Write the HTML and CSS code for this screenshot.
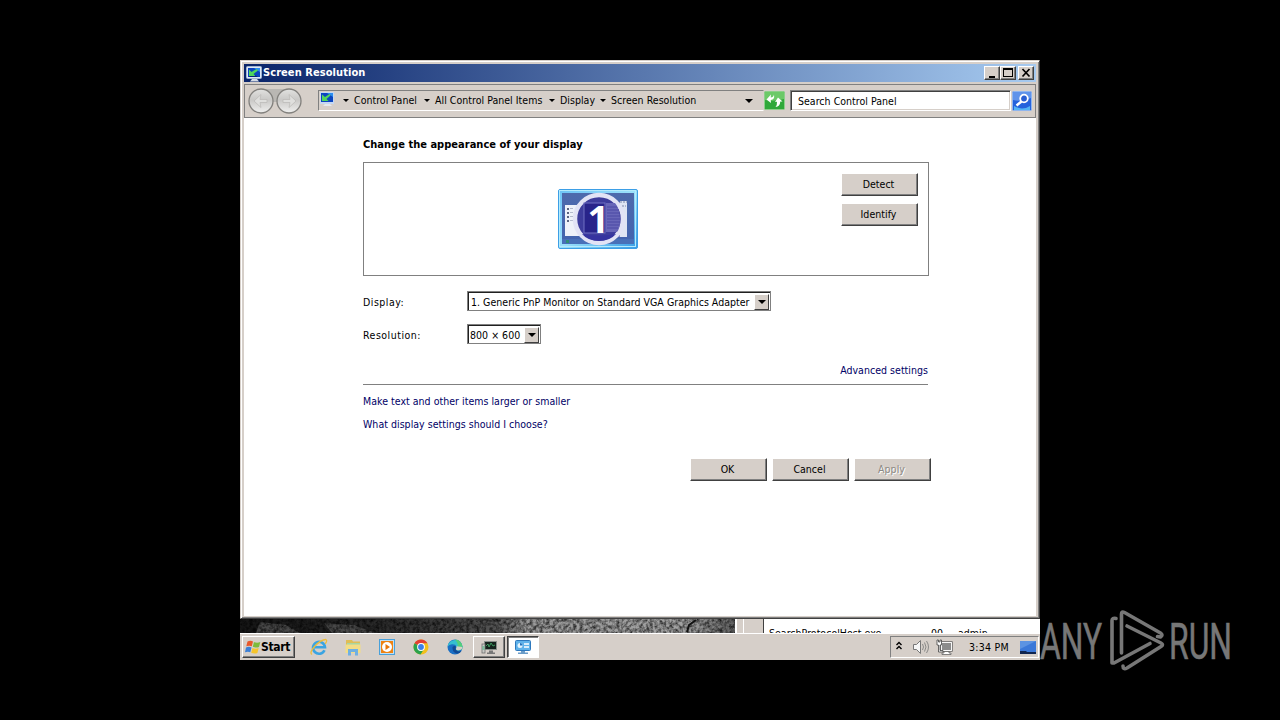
FILE: index.html
```html
<!doctype html>
<html>
<head>
<meta charset="UTF-8">
<title>Screen Resolution</title>
<link rel="stylesheet" href="styles.css">
</head>

<body>
<div class="desktop">
	<div class="window">
		<div class="titlebar">
			<svg class="title-icon" width="17" height="16" viewBox="0 0 17 16">
				<rect x="0.5" y="0.5" width="15" height="12" rx="1" fill="#dfe8f5" stroke="#9fb4d0"/>
				<rect x="2" y="2" width="12" height="9" fill="#0b45c0"/>
				<path d="M8 2h6v4z" fill="#2c8df0"/>
				<path d="M2 11h10l-3-2H6z" fill="#07217a"/>
				<path d="M3 3.500v6.500h6.500L7.500 8 12 4.500 10.500 3 5.500 6z" fill="#4fd65c"/>
				<path d="M4 15.500h9l-2-2.500H6z" fill="#d5dce6"/>
			</svg>
			<span class="title-text">Screen Resolution</span>
			<div class="title-buttons">
				<span class="tb"><svg width="12" height="10"><path d="M3 8h6v2H3z"/></svg></span>
				<span class="tb"><svg width="12" height="10"><path d="M1 0h10v9H1zM2 2v6h8V2z" fill-rule="evenodd"/></svg></span>
				<span class="tb close"><svg width="12" height="10"><path d="M2.500 1l7 7.500M9.500 1l-7 7.500" stroke="#000" stroke-width="1.700"/></svg></span>
			</div>
		</div>

		<div class="toolbar">
			<svg class="nav" width="56" height="28" viewBox="0 0 56 28">
				<defs>
					<linearGradient id="ball" x1="0" y1="0" x2="0" y2="1">
						<stop offset="0" stop-color="#e2e2e0"/>
						<stop offset=".45" stop-color="#c9c8c6"/>
						<stop offset="1" stop-color="#f0f0ef"/>
					</linearGradient>
				</defs>
				<path d="M14 2h28v9q-14 8-28 0z" fill="#b9b7b3"/>
				<circle cx="14" cy="14" r="12" fill="url(#ball)" stroke="#82807d" stroke-width="1.300"/>
				<circle cx="42" cy="14" r="12" fill="url(#ball)" stroke="#82807d" stroke-width="1.300"/>
				<path d="M7 14l7-6.500-1 5h7v3h-7l1 5z" fill="#dfdfdd" stroke="#bcbbb9" stroke-width=".8"/>
				<path d="M49 14l-7-6.500 1 5h-7v3h7l-1 5z" fill="#dfdfdd" stroke="#bcbbb9" stroke-width=".8"/>
			</svg>
			<div class="address">
				<svg class="addr-icon" width="16" height="16" viewBox="0 0 16 16">
					<rect x="0" y="0" width="14" height="12" fill="#c5d8f2"/>
					<rect x="1" y="1" width="12" height="9" fill="#0b45c0"/>
					<path d="M7 1h6v4z" fill="#2c8df0"/>
					<path d="M2 2.500V9h6.500L6.500 7 10.500 3.500 9.500 2 5 5z" fill="#4fd65c"/>
					<path d="M3 14h9l-2-2H5z" fill="#e4e8ee"/>
				</svg>
				<i class="arrow a1"></i>
				<span class="crumb c1">Control Panel</span>
				<i class="arrow"></i>
				<span class="crumb c2">All Control Panel Items</span>
				<i class="arrow"></i>
				<span class="crumb c3">Display</span>
				<i class="arrow"></i>
				<span class="crumb c4">Screen Resolution</span>
				<i class="arrow big"></i>
			</div>
			<svg class="refresh" width="21" height="19" viewBox="0 0 21 19">
				<rect x=".5" y=".5" width="20" height="18" rx="1" fill="#2fa83a" stroke="#8ccf8a"/>
				<path d="M1 1h19v7q-9 3-19 1z" fill="#6cc968"/>
				<path d="M2.500 8.500l4.500-5-.3 3q2.800 0 3.300-3 1 5-3.300 5.500l.3 3z" fill="#fff"/>
				<path d="M18.500 10.500l-4.500-4-3 4.500 2-.3q.3 3-1.500 5.300 4.500-.5 4.800-5.500z" fill="#fff"/>
			</svg>
			<div class="search"><span>Search Control Panel</span></div>
			<svg class="search-btn" width="20" height="20" viewBox="0 0 20 20">
				<rect x=".5" y=".5" width="19" height="19" rx="1" fill="#2462dc" stroke="#8fb5ee"/>
				<path d="M1 1h18v6q-8 4-18 2z" fill="#5f93ea"/>
				<path d="M2 15q8 5 16 0v4H2z" fill="#52b4f4"/>
				<circle cx="12" cy="7.500" r="3.800" fill="#2a5fd2" stroke="#fff" stroke-width="1.800"/>
				<path d="M9.500 10.500l-5 4" stroke="#fff" stroke-width="2.500"/>
			</svg>
		</div>

		<div class="content">
			<h1>Change the appearance of your display</h1>
			<div class="preview">
				<svg class="monitor" width="80" height="60" viewBox="0 0 80 60">
					<defs>
						<linearGradient id="frame" x1="0" y1="0" x2="1" y2="1">
							<stop offset="0" stop-color="#6cc3f6"/>
							<stop offset=".5" stop-color="#9be1fb"/>
							<stop offset="1" stop-color="#369be6"/>
						</linearGradient>
						<linearGradient id="desk" x1="0" y1="0" x2="0" y2="1">
							<stop offset="0" stop-color="#4e6aac"/>
							<stop offset="1" stop-color="#4263ae"/>
						</linearGradient>
					</defs>
					<rect x=".5" y=".5" width="79" height="59" rx="1.500" fill="url(#frame)" stroke="#3d9fe6"/>
					<rect x="1.500" y="1.500" width="76" height="56" fill="none" stroke="#b4ebfc"/>
					<rect x="4" y="4" width="72" height="51" fill="url(#desk)"/>
					<rect x="7" y="16" width="23" height="31" fill="#eef1f9"/>
					<path d="M10 19v15" stroke="#5c6480" stroke-width="2" stroke-dasharray="2 2"/>
					<path d="M13.500 19v15" stroke="#b4bacd" stroke-width="3" stroke-dasharray="1 3"/>
					<rect x="24" y="13" width="45" height="35" fill="#8584c8"/>
					<rect x="62" y="12" width="7" height="36" fill="#dfe5f3"/>
					<path d="M62 13h7M64 17h4" stroke="#7e88a8" stroke-dasharray="2 1"/>
					<rect x="4" y="50" width="72" height="5" fill="#4870b8"/>
					<rect x="8" y="51" width="3" height="3" fill="#2e8f75"/>
					<circle cx="41" cy="30" r="24" fill="#3d3c9c" stroke="#e2e3f5" stroke-width="4.500"/>
					<rect x="26" y="14" width="21" height="30" fill="#28248a" stroke="#7170c2" stroke-width="1"/>
					<path d="M48 14h9q5 6 5 16t-3 13H48z" fill="#6866b8"/>
					<path d="M49 18h10M49 21h12M49 24h13M49 27h13M49 30h13M49 33h13M49 36h12M49 39h11" stroke="#4b49a4"/>
					<path d="M24 45q17 3 34 0-6 7-17 7t-17-7z" fill="#3634a0"/>
					<text x="29.500" y="44" class="screen-num">1</text>
				</svg>
				<div class="side-buttons">
					<span class="btn">Detect</span>
					<span class="btn">Identify</span>
				</div>
			</div>

			<div class="row">
				<label>Display:</label>
				<div class="select display-select"><span>1. Generic PnP Monitor on Standard VGA Graphics Adapter</span><b><i class="arrow big"></i></b></div>
			</div>
			<div class="row">
				<label>Resolution:</label>
				<div class="select res-select"><span>800 × 600</span><b><i class="arrow big"></i></b></div>
			</div>

			<div class="advanced"><a>Advanced settings</a></div>
			<div class="links">
				<a>Make text and other items larger or smaller</a>
				<a>What display settings should I choose?</a>
			</div>
			<div class="dialog-buttons">
				<span class="btn">OK</span>
				<span class="btn">Cancel</span>
				<span class="btn disabled">Apply</span>
			</div>
		</div>
	</div>

	<!-- what shows of the desktop under the window -->
	<div class="strip">
		<svg class="wallpaper" width="495" height="14">
			<defs>
				<linearGradient id="rock">
					<stop offset="0" stop-color="#151515"/>
					<stop offset=".22" stop-color="#222"/>
					<stop offset=".4" stop-color="#3a3a3a"/>
					<stop offset=".52" stop-color="#555"/>
					<stop offset=".58" stop-color="#9a9a9a"/>
					<stop offset=".9" stop-color="#a2a2a2"/>
					<stop offset="1" stop-color="#606060"/>
				</linearGradient>
				<filter id="grain" x="0" y="0" width="1" height="1">
					<feTurbulence type="fractalNoise" baseFrequency=".3" numOctaves="3" seed="4"/>
					<feColorMatrix values="0 0 0 0 0  0 0 0 0 0  0 0 0 0 0  1.5 0 0 0 -.5"/>
				</filter>
			</defs>
			<rect width="495" height="14" fill="url(#rock)"/>
			<path d="M20 3l26 3 14 8H16zM84 4l30 2 22 8H92z" fill="#484848"/>
			<rect width="495" height="14" filter="url(#grain)"/>
			<path d="M456 1l-7 5-2 7" fill="none" stroke="#111" stroke-width="2"/>
		</svg>
		<div class="back-frame"></div>
		<div class="back-list"><span class="p1">SearchProtocolHost.exe</span><span class="p2">00</span><span class="p3">admin</span></div>
	</div>

	<div class="taskbar">
		<div class="start">
			<svg width="16" height="16" viewBox="0 0 16 16">
				<path d="M2.500 2.500q3-1.500 5.500 0L6.800 7.300q-2.600-1.300-5.500 0z" fill="#e8582a"/>
				<path d="M9 3q3 1.400 6.300 0L14 8q-3 1.200-6.200-.2z" fill="#7dbb3c"/>
				<path d="M1 8.500q3-1.300 5.500 0L5.300 13.300q-2.300-1.300-5.300 0z" fill="#3b7fd6"/>
				<path d="M7.500 9q3 1.300 6.200 0L12.400 14q-3 1.200-6.200-.3z" fill="#f6c52c"/>
			</svg>
			<span>Start</span>
		</div>
		<div class="quick">
			<svg width="18" height="18" viewBox="0 0 18 18">
				<path d="M14.500 12.200A6 6 0 1 1 15 9.300H4.500" fill="none" stroke="#3aa4e2" stroke-width="2.600"/>
				<path d="M2 16.500Q-1 15 4.500 8.500 11 1.500 15.800 1.500q2 .8-.6 4.300" fill="none" stroke="#edbd3a" stroke-width="1.300"/>
			</svg>
			<svg width="18" height="18" viewBox="0 0 18 18">
				<path d="M2 2h6l1 1.500h7V14H2z" fill="#e0bd55"/>
				<path d="M3 5h13v3H3z" fill="#a9d6a0"/>
				<path d="M1.500 6.500h15V15h-15z" fill="#f3dd86"/>
				<path d="M4 17.500V11h10v6.500h-3V14H7v3.500z" fill="#6fb0e2"/>
			</svg>
			<svg width="18" height="18" viewBox="0 0 18 18">
				<rect x="1.500" y="1.500" width="15" height="15" fill="#bfe0f6" stroke="#48a0da"/>
				<rect x="3" y="3" width="12" height="12" fill="#ee8212"/>
				<circle cx="9" cy="9" r="5" fill="#fff"/>
				<path d="M7.500 6v6l4.500-3z" fill="#e8760a"/>
			</svg>
			<svg width="18" height="18" viewBox="0 0 18 18">
				<circle cx="9" cy="9" r="7.500" fill="#f2c01b"/>
				<path d="M9 9L2.500 5.200A7.500 7.500 0 0 1 15.500 5.300H9z" fill="#e23f33"/>
				<path d="M2.500 5.200A7.500 7.500 0 0 0 8.500 16.500L12.200 10.800 9 9z" fill="#2ba24c"/>
				<circle cx="9" cy="9" r="3.900" fill="#fff"/>
				<circle cx="9" cy="9" r="2.900" fill="#3c80e8"/>
			</svg>
			<svg width="18" height="18" viewBox="0 0 18 18">
				<circle cx="9" cy="9" r="7.500" fill="#1a6fc4"/>
				<path d="M1.600 8.500A7.500 7.500 0 0 1 16.500 9q0 3-3.500 3.200-3 0-3-1.500 1-.8.600-2.200Q9.500 6 6 6.200 3 6.500 1.600 8.500z" fill="#35bfd0"/>
				<path d="M9 1.500A7.500 7.500 0 0 1 16.500 9q0 3-3.500 3.200-3 0-3-1.500Q14 7 9 1.500z" fill="#52cf7c"/>
				<path d="M6.500 9q-.5 5 4 6.500 3 .3 5-2.500-5 1.500-6-2.300.6-1.700 0-2.700Q7.500 7.500 6.500 9z" fill="#124a93"/>
				<path d="M10 10.700q.8-1 .4-2.400l6 .8q0 2.900-3.400 3.100-3 0-3-1.500z" fill="#d6d0c8"/>
			</svg>
		</div>
		<div class="task">
			<svg width="18" height="16" viewBox="0 0 18 16">
				<rect x="4.500" y="2.500" width="12" height="8" fill="#14231d" stroke="#8a908c"/>
				<path d="M6 7l2-2 1 3 2-4 2 3 2-1" fill="none" stroke="#45b36c" stroke-width=".8"/>
				<path d="M9 11.500h4v2h2V15H7v-1.500h2z" fill="#777"/>
				<rect x="2" y="5" width="3" height="9" fill="#c8cac6" stroke="#707070" stroke-width=".8"/>
				<path d="M2.500 8h2M2.500 10h2" stroke="#3b7"/>
			</svg>
		</div>
		<div class="task active">
			<svg width="18" height="16" viewBox="0 0 18 16">
				<rect x="1.500" y="1.500" width="15" height="10" rx="1" fill="#5fb2ea" stroke="#2d78bd"/>
				<circle cx="6" cy="6.500" r="2.500" fill="#e4f4fd"/>
				<path d="M6 6.500V4A2.500 2.500 0 0 1 8.500 6.500z" fill="#2573bb"/>
				<path d="M10 5h5M10 8h5" stroke="#fff" stroke-width="1.300"/>
				<path d="M7 12h4v1.500h3V15H4v-1.500h3z" fill="#6b9cc8"/>
			</svg>
		</div>
		<div class="tray">
			<svg class="chevrons" width="8" height="12" viewBox="0 0 8 12"><path d="M1.500 5L4 2.500 6.500 5M1.500 9L4 6.500 6.500 9" fill="none" stroke="#000" stroke-width="1.400"/></svg>
			<svg class="speaker" width="18" height="16" viewBox="0 0 18 16">
				<path d="M1.500 5.500h3l4-4v13l-4-4h-3z" fill="#f6f6f6" stroke="#777"/>
				<path d="M10.500 5q2 3 0 6M12.500 3.500q3 4.500 0 9M14.500 2q4 6 0 12" fill="none" stroke="#8a8a88"/>
			</svg>
			<svg class="network" width="17" height="16" viewBox="0 0 17 16">
				<rect x="5.500" y="3.500" width="10" height="8" fill="#8c8c8c" stroke="#fff"/>
				<rect x="4.700" y="2.700" width="11.600" height="9.600" fill="none" stroke="#555" stroke-width=".7"/>
				<path d="M8 12.500h5v1.500h2v1.500H6V14h2z" fill="#fff" stroke="#555" stroke-width=".7"/>
				<path d="M1 1v5h1.500v7H7v-1.500H4V6h1.500V1H4v2H2.500V1z" fill="#fff" stroke="#444" stroke-width=".8"/>
			</svg>
			<span class="clock">3:34 PM</span>
			<svg class="show-desk" width="16" height="13" viewBox="0 0 16 13">
				<rect width="16" height="12" fill="#3b78d8"/>
				<path d="M0 0h16L0 8z" fill="#5c93e2"/>
				<path d="M0 10h6l1 1h9v2H0z" fill="#10254f"/>
			</svg>
		</div>
	</div>
</div>

<svg class="watermark" width="200" height="64" viewBox="1036 608 200 64">
	<text class="wm" x="1040" y="659" textLength="62" lengthAdjust="spacingAndGlyphs">ANY</text>
	<text class="wm" x="1169" y="659" textLength="63" lengthAdjust="spacingAndGlyphs">RUN</text>
	<g fill="none" stroke="#777" stroke-width="3.600" stroke-linejoin="round" stroke-linecap="round">
		<path d="M1116 618.500q-4-1-4 2V663h2l36-19.500"/>
		<path d="M1121.500 653v-39q0-3 3-1.500l36 20.500q3 2 0 4l-3-.5"/>
		<path d="M1127 626l34 17q3 1.500 0 3.500l-34 21.500q-4 2-4-2"/>
	</g>
</svg>
</body>
</html>
```
FILE: styles.css
```css
html, body {
	height: 100%;
	margin: 0;
}

body {
	background: #000;
	overflow: hidden;
	font-family: "DejaVu Sans Condensed", "DejaVu Sans", sans-serif;
	font-stretch: condensed;
	font-size: 10.5px;
	letter-spacing: 0.03px;
	line-height: 14px;
	color: #000;
	white-space: nowrap;
}

* {
	box-sizing: border-box;
}

svg {
	display: block;
	flex: none;
}

.desktop {
	width: 800px;
	height: 600px;
	margin: 60px auto 0;
	overflow: hidden;
	background: #d6cfc9;
}

/* window */
.window {
	height: 559px;
	padding: 3px 3px 2px 3px;
	background: #d6cfc9;
	border: 1px solid #d6cfc9;
	border-right-color: #404040;
	border-bottom-color: #404040;
	box-shadow: inset 1px 1px #fff, inset -1px -1px #808080;
}

.titlebar {
	display: flex;
	align-items: center;
	height: 18px;
	padding: 0 2px;
	background: linear-gradient(to right, #0a246a, #a6caf0);
}

.title-icon {
	margin-top: 1px;
}

.title-text {
	color: #fff;
	font-weight: bold;
	font-size: 11px;
	letter-spacing: 0.07px;
}

.title-buttons {
	display: flex;
	margin-left: auto;
}

.tb {
	width: 16px;
	height: 14px;
	padding: 1px;
	background: #d6cfc9;
	border: 1px solid #fff;
	border-right-color: #404040;
	border-bottom-color: #404040;
	box-shadow: inset -1px -1px #808080;
}

.close {
	margin-left: 2px;
}

.toolbar {
	display: flex;
	align-items: flex-start;
	height: 34px;
	margin-top: 2px;
	padding: 2px 1px 0 2px;
	background: #d6cfc9;
	border: 1px solid #808080;
}

.toolbar .nav {
	margin-right: 1px;
}

.address {
	display: flex;
	align-items: center;
	width: 446px;
	height: 21px;
	margin: 3px 0 0 14px;
	padding: 0 0 2px 1px;
	border: 1px solid #808080;
	border-right-color: #d6cfc9;
	border-bottom-color: #fff;
}

.arrow {
	flex: none;
	border: 3px solid transparent;
	border-top-color: #000;
	border-bottom: 0;
	margin: 0 5px 0 6px;
}

.arrow.a1 {
	margin: 0 5px 0 7px;
}

.arrow.big {
	border-width: 4px 4px 0;
}

.address .arrow {
	position: relative;
	top: 1px;
}

.address .big {
	margin: 0 10px 0 auto;
}

.crumb {
	flex: none;
}

.c1 { width: 64px; }
.c2 { width: 108px; }
.c3 { width: 34px; }
.c4 { width: 87px; }

.refresh {
	margin-top: 4px;
}

.search {
	width: 221px;
	height: 21px;
	margin: 3px 1px 0 5px;
	padding: 3px 0 0 7px;
	background: #fff;
	border: 1px solid #808080;
	border-right-color: #fff;
	border-bottom-color: #fff;
	box-shadow: inset 1px 1px #404040, inset -1px -1px #d6cfc9;
}

.search-btn {
	margin-top: 4px;
}

/* page */
.content {
	height: 498px;
	padding: 19px 106px 0 119px;
	background: #fff;
}

h1 {
	margin: 0 0 11px;
	padding-top: 1px;
	font-size: 11px;
	line-height: 13px;
	letter-spacing: 0.02px;
}

.preview {
	display: flex;
	justify-content: space-between;
	width: 566px;
	height: 114px;
	padding: 10px 10px 0 194px;
	border: 1px solid #808080;
}

.monitor {
	margin-top: 16px;
}

.screen-num {
	font: bold 38px "Open Sans", Arial, sans-serif;
	letter-spacing: 0;
	fill: #fff;
}

.side-buttons {
	display: flex;
	flex-direction: column;
	gap: 7px;
}

.btn {
	width: 77px;
	height: 23px;
	padding: 3px 2px 0 0;
	text-align: center;
	background: #d6cfc9;
	border: 1px solid #fff;
	border-right-color: #404040;
	border-bottom-color: #404040;
	box-shadow: inset -1px -1px #808080;
}

.disabled {
	color: #8d8984;
	text-shadow: 1px 1px #fff;
}

.row {
	display: flex;
	align-items: center;
	height: 20px;
	margin-top: 15px;
}

.row + .row {
	margin-top: 13px;
}

.row label {
	width: 104px;
	padding-top: 2px;
	letter-spacing: 0.5px;
}

.select {
	display: flex;
	align-items: center;
	justify-content: space-between;
	height: 20px;
	padding: 2px 1px 1px 3px;
	border: 1px solid #808080;
	box-shadow: inset 1px 1px #202020;
}

.display-select {
	width: 304px;
}

.res-select {
	width: 74px;
	padding-left: 2px;
}

.select b {
	display: flex;
	align-items: center;
	justify-content: center;
	width: 15px;
	height: 16px;
	background: #d6cfc9;
	border: 1px solid #fff;
	border-right-color: #404040;
	border-bottom-color: #404040;
}

.select .arrow {
	margin: 0;
}

a {
	color: #000066;
}

.advanced {
	width: 565px;
	height: 22px;
	margin-top: 19px;
	text-align: right;
	border-bottom: 1px solid #808080;
}

.links {
	display: flex;
	flex-direction: column;
	gap: 9px;
	margin-top: 9px;
}

.dialog-buttons {
	display: flex;
	justify-content: flex-end;
	width: 568px;
	gap: 5px;
	margin-top: 27px;
}

.dialog-buttons .btn {
	padding-top: 3px;
}

/* strip of desktop between the window and the taskbar */
.strip {
	display: flex;
	height: 14px;
	overflow: hidden;
}

.back-frame {
	width: 29px;
	background: linear-gradient(to right, #fff 2px, #d6cfc9 2px, #d6cfc9 8px, #fff 8px, #fff 9px, #d6cfc9 9px);
	border-right: 1px solid #404040;
}

.back-list {
	display: flex;
	flex: 1;
	padding: 7px 0 0 5px;
	background: #fff;
}

.p1 { width: 162px; }
.p2 { width: 27px; }

/* taskbar */
.taskbar {
	display: flex;
	align-items: flex-start;
	height: 27px;
	padding: 2px 1px 0 2px;
	background: #d6cfc9;
	border-top: 1px solid #fff;
}

.start {
	display: flex;
	align-items: center;
	width: 53px;
	height: 22px;
	padding: 0 0 0 2px;
	border: 1px solid #fff;
	border-right-color: #404040;
	border-bottom-color: #404040;
	box-shadow: inset -1px -1px #808080;
	font-weight: bold;
	font-size: 12px;
	letter-spacing: -0.3px;
}

.quick {
	display: flex;
	gap: 16px;
	margin: 2px 0 0 15px;
}

.task {
	display: flex;
	align-items: center;
	justify-content: center;
	width: 32px;
	height: 22px;
	margin-left: 9px;
	border: 1px solid #fff;
	border-right-color: #404040;
	border-bottom-color: #404040;
	box-shadow: inset -1px -1px #808080;
}

.active {
	margin-left: 2px;
	background: #fff;
	border-color: #404040 #fff #fff #404040;
	box-shadow: inset 1px 1px #808080;
}

.tray {
	display: flex;
	align-items: center;
	width: 149px;
	height: 22px;
	margin-left: auto;
	padding-left: 4px;
	border: 1px solid #808080;
	border-right-color: #fff;
	border-bottom-color: #fff;
}

.chevrons {
	margin-bottom: 2px;
}

.speaker {
	margin-left: 9px;
}

.network {
	margin-left: 6px;
}

.clock {
	width: 41px;
	margin-left: 16px;
	letter-spacing: 0.25px;
}

.show-desk {
	margin-left: 10px;
}

.watermark {
	position: absolute;
	left: 1036px;
	top: 608px;
}

.wm {
	font: 400 50px Roboto, "Liberation Sans", sans-serif;
	letter-spacing: 0;
	fill: #777;
	stroke: #777;
	stroke-width: 0.6px;
}
```
